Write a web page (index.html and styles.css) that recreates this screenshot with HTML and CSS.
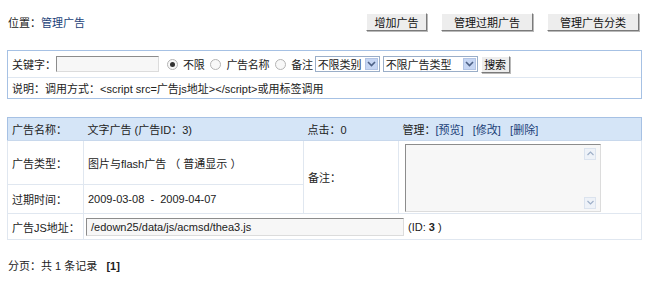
FILE: index.html
```html
<!DOCTYPE html>
<html>
<head>
    <meta charset="utf-8">
    <link rel="stylesheet" href="styles.css">
</head>
<body>
<div class="page">
  <div class="topbar">
    <div class="place">位置：<a href="#" class="link">管理广告</a></div>
    <div class="actions">
      <span class="btn w60">增加广告</span>
      <span class="btn w92">管理过期广告</span>
      <span class="btn w92 last">管理广告分类</span>
    </div>
  </div>

  <div class="searchbox">
    <div class="srow first">
      <span>关键字：</span>
      <span class="input kw"></span>
      <span class="radio on"></span><span class="rlabel">不限</span>
      <span class="radio"></span><span class="rlabel">广告名称</span>
      <span class="radio"></span><span class="rlabel">备注</span>
      <span class="select s1"><span class="stext">不限类别</span><span class="arrow"><svg width="9" height="6" viewBox="0 0 9 6"><path d="M1 1 L4.5 4.5 L8 1" fill="none" stroke="#4d6185" stroke-width="1.6"/></svg></span></span>
      <span class="select s2"><span class="stext">不限广告类型</span><span class="arrow"><svg width="9" height="6" viewBox="0 0 9 6"><path d="M1 1 L4.5 4.5 L8 1" fill="none" stroke="#4d6185" stroke-width="1.6"/></svg></span></span>
      <span class="btn small">搜索</span>
    </div>
    <div class="srow">说明：调用方式：&lt;script src=广告js地址&gt;&lt;/script&gt;或用标签调用</div>
  </div>

  <table class="adtable">
    <colgroup>
      <col style="width:76px">
      <col style="width:220px">
      <col style="width:95px">
      <col>
    </colgroup>
    <tr class="head">
      <td>广告名称：</td>
      <td>文字广告 (广告ID：3)</td>
      <td>点击：0</td>
      <td>管理：<a href="#" class="link">[预览]</a>&nbsp;&nbsp;&nbsp;<a href="#" class="link">[修改]</a>&nbsp;&nbsp;&nbsp;<a href="#" class="link">[删除]</a></td>
    </tr>
    <tr class="r2">
      <td>广告类型：</td>
      <td>图片与flash广告 （ 普通显示 ）</td>
      <td rowspan="2">备注：</td>
      <td rowspan="2" class="memocell">
        <div class="memo">
          <div class="scroll">
            <span class="sbtn"><svg width="7" height="5" viewBox="0 0 7 5"><path d="M0.5 4 L3.5 1 L6.5 4" fill="none" stroke="#9fb0c8" stroke-width="1.2"/></svg></span>
            <span class="sbtn"><svg width="7" height="5" viewBox="0 0 7 5"><path d="M0.5 1 L3.5 4 L6.5 1" fill="none" stroke="#9fb0c8" stroke-width="1.2"/></svg></span>
          </div>
        </div>
      </td>
    </tr>
    <tr class="r3">
      <td>过期时间：</td>
      <td>2009-03-08 &nbsp;- &nbsp;2009-04-07</td>
    </tr>
    <tr class="r4">
      <td>广告JS地址：</td>
      <td colspan="3" class="jscell"><span class="input js">/edown25/data/js/acmsd/thea3.js</span><span class="idnote">(ID: <b>3</b> )</span></td>
    </tr>
  </table>

  <div class="pager">分页：共 1 条记录 &nbsp;&nbsp;<b>[1]</b></div>
</div>
</body>
</html>
```

FILE: styles.css
```css
body {
  margin: 0;
  font-family: "Liberation Sans", "Noto Sans CJK SC", sans-serif;
  font-size: 11px;
  color: #222;
  background: #fff;
}

.page {
  padding: 0 8px 0 7px;
}

.link {
  color: #1b3f78;
  text-decoration: none;
}

.topbar {
  display: flex;
  justify-content: space-between;
  align-items: center;
  padding-top: 12px;
  height: 19px;
}

.place {
  padding-left: 1px;
}

.actions {
  display: flex;
  gap: 14px;
}

.btn {
  display: inline-flex;
  align-items: center;
  justify-content: center;
  height: 16px;
  background: #ededed;
  border: 1px solid;
  border-color: #fff #7a7a7a #7a7a7a #fff;
  box-shadow: 1px 1px 0 #b9b9b9;
  color: #111;
}

.w60 { width: 59px; }
.w92 { width: 90px; }
.last { margin-right: 3px; }

.searchbox {
  margin-top: 19px;
  border: 1px solid #a6c1e4;
}

.srow {
  display: flex;
  align-items: center;
  height: 20px;
  padding-left: 4px;
}

.srow.first {
  height: 26px;
  border-bottom: 1px solid #dfe7f1;
}

.input {
  display: inline-block;
  box-sizing: border-box;
  border: 1px solid;
  border-color: #8c8c8c #dcdcdc #dcdcdc #8c8c8c;
  background: #f7f7f7;
}

.kw {
  width: 103px;
  height: 16px;
  margin-left: 0;
}

.radio {
  display: inline-block;
  box-sizing: border-box;
  width: 11px;
  height: 11px;
  border-radius: 50%;
  border: 1px solid #b4b4b4;
  background: #f8f8f8;
  margin: 0 5px 0 8px;
  position: relative;
}

.radio.on::after {
  content: "";
  position: absolute;
  left: 2px;
  top: 2px;
  width: 5px;
  height: 5px;
  border-radius: 50%;
  background: #333;
}

.rlabel {
  margin-right: -2px;
  letter-spacing: -0.3px;
}

.select {
  display: inline-flex;
  align-items: center;
  box-sizing: border-box;
  height: 16px;
  border: 1px solid #9aaec8;
  background: #fff;
  margin-left: 3px;
}

.s1 { width: 65px; margin-left: 4px; }
.s2 { width: 95px; }

.stext {
  flex: 1;
  padding-left: 2px;
  white-space: nowrap;
}

.arrow {
  display: flex;
  align-items: center;
  justify-content: center;
  width: 13px;
  height: 12px;
  margin-right: 1px;
  background: #c6d6f3;
  border: 1px solid #b2c4e4;
  box-sizing: border-box;
}

.btn.small {
  width: 27px;
  height: 15px;
  margin-left: 3px;
}

.adtable {
  margin-top: 18px;
  width: 100%;
  border-collapse: collapse;
  table-layout: fixed;
  border: 1px solid #a6c1e4;
}

.adtable td {
  padding: 0 0 0 4px;
  border: 1px solid #e0e7f0;
  vertical-align: middle;
  white-space: nowrap;
}

.head td {
  background: #d5e5f7;
  height: 22px;
  border: none;
  border-bottom: 1px solid #c8d8ec;
}

.r2 td { height: 43px; }
.r3 td { height: 28px; }
.r4 td { height: 25px; }

.memocell {
  padding-left: 6px !important;
  padding-top: 1px !important;
}

.memo {
  box-sizing: border-box;
  width: 196px;
  height: 68px;
  border: 1px solid;
  border-color: #8c8c8c #dcdcdc #dcdcdc #8c8c8c;
  background: #f7f7f7;
  display: flex;
  justify-content: flex-end;
}

.scroll {
  width: 14px;
  display: flex;
  flex-direction: column;
  justify-content: space-between;
  padding: 3px 2px 2px 0;
}

.sbtn {
  display: flex;
  align-items: center;
  justify-content: center;
  width: 12px;
  height: 12px;
  box-sizing: border-box;
  border: 1px solid #dbe3ee;
  background: #eef2f8;
}

.jscell {
  padding-left: 2px !important;
}

.js {
  width: 318px;
  height: 18px;
  line-height: 16px;
  padding-left: 4px;
  vertical-align: middle;
  font-size: 11px;
  color: #222;
}

.idnote {
  margin-left: 4px;
  vertical-align: middle;
}

.pager {
  margin-top: 17px;
  padding-left: 1px;
}
```
